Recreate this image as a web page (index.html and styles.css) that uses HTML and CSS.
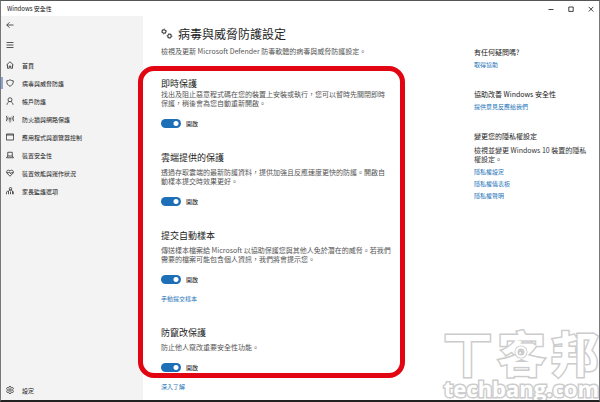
FILE: index.html
```html
<!DOCTYPE html>
<html lang="zh-Hant">
<head>
<meta charset="utf-8">
<meta name="viewport" content="width=device-width, initial-scale=1">
<title>Windows 安全性</title>
<link rel="stylesheet" href="styles.css">
</head>
<body>
<div class="window">
  <header class="titlebar">
    <span class="titlebar-name">Windows 安全性</span>
    <div class="titlebar-buttons">
      <button type="button" aria-label="最小化"><svg viewBox="0 0 6 6"><path d="M.5 3.5h5"/></svg></button>
      <button type="button" aria-label="最大化"><svg viewBox="0 0 6 6"><path d="M.8 1h4.4v4.4H.8z"/></svg></button>
      <button type="button" aria-label="關閉"><svg viewBox="0 0 6 6"><path d="M.7.9l4.6 4.6M5.3.9L.7 5.5"/></svg></button>
    </div>
  </header>
  <div class="body">
    <nav class="sidebar">
      <button type="button" class="nav-button" aria-label="返回"><svg class="icon" viewBox="0 0 16 16"><path d="M15 8H1.5M7 2.500L1.500 8 7 13.500"/></svg></button>
      <button type="button" class="nav-button menu" aria-label="功能表"><svg class="icon" viewBox="0 0 16 16"><path d="M1 3h14M1 8h14M1 13h14"/></svg></button>
      <ul class="nav-list">
        <li><a href="#"><svg class="icon" viewBox="0 0 16 16"><path d="M1 8l7-6.500L15 8M3 7v7.500h3.500V10h3v4.500H13V7"/></svg>首頁</a></li>
        <li><a href="#" class="active"><svg class="icon" viewBox="0 0 16 16"><path d="M8 1.500C6 3 4 3.500 1.500 3.500 1 9 3.500 12.500 8 14.500c4.500-2 7-5.500 6.500-11C12 3.500 10 3 8 1.500z"/></svg>病毒與威脅防護</a></li>
        <li><a href="#"><svg class="icon" viewBox="0 0 16 16"><circle cx="8" cy="5.500" r="4"/><path d="M2 15.500c.3-3.500 2-5.500 4.500-6.200M14 15.500c-.3-3.500-2-5.500-4.500-6.200"/></svg>帳戶防護</a></li>
        <li><a href="#"><svg class="icon" viewBox="0 0 16 16"><circle cx="8" cy="7" r="1.500"/><path d="M8 8.500V15M4.500 3.500c-1.700 2-1.700 5 0 7M11.500 3.500c1.700 2 1.700 5 0 7M2 1.500c-2.500 3-2.500 8 0 11M14 1.500c2.500 3 2.500 8 0 11"/></svg>防火牆與網路保護</a></li>
        <li><a href="#"><svg class="icon" viewBox="0 0 16 16"><path d="M.8 2h14.400v12H.8zM.8 4h14.400"/></svg>應用程式與瀏覽器控制</a></li>
        <li><a href="#"><svg class="icon" viewBox="0 0 16 16"><path d="M3.500 2.500h9V10h-9zM3.500 10L1 13.500h14L12.500 10"/></svg>裝置安全性</a></li>
        <li><a href="#"><svg class="icon" viewBox="0 0 16 16"><path d="M8 14.500L1.800 8C-.5 4.500 4.500-.3 8 4c3.500-4.300 8.500.5 6.200 4zM1.500 7.500h4l1.500-2 2 4 1.500-2h4"/></svg>裝置效能與運作狀況</a></li>
        <li><a href="#"><svg class="icon" viewBox="0 0 16 16"><circle cx="9" cy="3.500" r="2.500"/><path d="M5 14.500V9c0-4 8-4 8 0v5.500M9 9v5.500M1 14.500V11c0-2.500 3-3 4-2M13 9c2 0 2.500 1 2.500 3v2.500"/></svg>家長監護選項</a></li>
      </ul>
      <a href="#" class="nav-settings"><svg class="icon" viewBox="0 0 16 16"><circle cx="8" cy="8" r="2.500"/><path d="M6.500 1h3l.5 2 1.500.8 2-.8 1.500 2.500-1.500 1.500v2l1.500 1.500-1.500 2.500-2-.8-1.500.8-.5 2h-3L6 13l-1.500-.8-2 .8L1 10.500 2.500 9V7L1 5.500 2.500 3l2 .8L6 3z"/></svg>設定</a>
    </nav>
    <main class="content">
      <div class="settings">
        <h1><svg class="gears" viewBox="0 0 24 24"><circle cx="6" cy="7" r="3.500"/><circle class="teeth" cx="6" cy="7" r="5"/><circle cx="17" cy="16" r="3.500"/><circle class="teeth" cx="17" cy="16" r="5"/></svg>病毒與威脅防護設定</h1>
        <p class="intro">檢視及更新 Microsoft Defender 防毒軟體的病毒與威脅防護設定。</p>
        <div class="sections">
          <section class="compact">
            <h2>即時保護</h2>
            <p>找出及阻止惡意程式碼在您的裝置上安裝或執行，您可以暫時先關閉即時<br>保護，稍後會為您自動重新開啟。</p>
            <label class="toggle"><input type="checkbox" role="switch" checked>開啟</label>
          </section>
          <section>
            <h2>雲端提供的保護</h2>
            <p>透過存取雲端的最新防護資料，提供加強且反應速度更快的防護。開啟自<br>動樣本提交時效果更好。</p>
            <label class="toggle"><input type="checkbox" role="switch" checked>開啟</label>
          </section>
          <section>
            <h2>提交自動樣本</h2>
            <p>傳送樣本檔案給 Microsoft 以協助保護您與其他人免於潛在的威脅。若我們<br>需要的檔案可能包含個人資訊，我們將會提示您。</p>
            <label class="toggle"><input type="checkbox" role="switch" checked>開啟</label>
            <a href="#" class="more">手動提交樣本</a>
          </section>
          <section>
            <h2>防竄改保護</h2>
            <p>防止他人竄改重要安全性功能。</p>
            <label class="toggle"><input type="checkbox" role="switch" checked>開啟</label>
            <a href="#" class="more">深入了解</a>
          </section>
        </div>
      </div>
      <aside class="help">
        <section>
          <h3>有任何疑問嗎?</h3>
          <a href="#">取得協助</a>
        </section>
        <section>
          <h3>協助改善 Windows 安全性</h3>
          <a href="#">提供意見反應給我們</a>
        </section>
        <section>
          <h3>變更您的隱私權設定</h3>
          <p>檢視並變更 Windows 10 裝置的隱私<br>權設定。</p>
          <a href="#">隱私權設定</a>
          <a href="#">隱私權儀表板</a>
          <a href="#">隱私權聲明</a>
        </section>
      </aside>
    </main>
  </div>
  <div class="watermark">
    <span class="mark-name"><span>丅</span><span>客</span><span>邦</span></span>
    <svg class="mark-eye" viewBox="0 0 16 16"><circle class="ring" cx="8" cy="8" r="6.500"/><circle class="pupil" cx="8" cy="8" r="4"/><circle class="glint" cx="7" cy="9" r="1"/></svg>
    <span class="mark-site">techbang.com</span>
  </div>
</div>
</body>
</html>
```
FILE: styles.css
```css
* {
  box-sizing: border-box;
}

body {
  margin: 0;
  font-family: "Noto Sans CJK TC", "Noto Sans", sans-serif;
  font-size: 7px;
  line-height: 9px;
  color: #333;
  background: #fff;
}

h1, h2, h3, p, ul {
  margin: 0;
  padding: 0;
  font-weight: 400;
}

a {
  color: #2473b8;
  text-decoration: none;
}

button {
  border: 0;
  padding: 0;
  background: none;
  color: inherit;
}

svg {
  display: block;
  fill: none;
  stroke: currentColor;
}

.window {
  position: relative;
  display: flex;
  flex-direction: column;
  min-height: 100vh;
  overflow: hidden;
  border: 1px solid #777;
  border-top-color: #555;
  border-bottom: 2px solid #222;
}

.titlebar {
  display: flex;
  align-items: center;
  justify-content: space-between;
  height: 15px;
  padding: 0 5px 0 6px;
  font-size: 6px;
  color: #111;
}

.titlebar-buttons {
  display: flex;
  gap: 14px;
}

.titlebar-buttons svg {
  width: 6px;
  height: 6px;
  stroke-width: 0.8;
}

.body {
  display: flex;
  flex: 1;
}

/* Navigation */
.sidebar {
  display: flex;
  flex-direction: column;
  width: 142px;
  padding-bottom: 1px;
  font-size: 6px;
  color: #222;
  background: #f3f3f3;
}

.icon {
  width: 8px;
  height: 8px;
  stroke-width: 1.5;
}

.nav-button {
  height: 17px;
  padding-left: 5px;
}

.nav-button.menu {
  height: 23px;
}

.nav-list {
  flex: 1;
  list-style: none;
}

.sidebar a {
  display: flex;
  align-items: center;
  gap: 8px;
  height: 18px;
  padding-left: 5px;
  color: inherit;
}

.sidebar .active {
  padding-left: 3px;
  border-left: 2px solid #8ea5d3;
  border-image: linear-gradient(transparent 20%, #8ea5d3 20% 80%, transparent 80%) 1;
}

/* Settings page */
.content {
  display: flex;
  flex: 1;
  justify-content: space-between;
  padding: 10px 0 7px 18px;
}

.settings {
  width: 236px;
  white-space: nowrap;
}

h1 {
  display: flex;
  align-items: center;
  gap: 5px;
  font-size: 12px;
  line-height: 16px;
  color: #222;
}

.gears {
  width: 12px;
  height: 12px;
  stroke-width: 2;
}

.gears .teeth {
  stroke-width: 1.4;
  stroke-dasharray: 1.8 2.1;
}

.intro {
  margin-top: 5px;
}

.sections {
  position: relative;
  display: flex;
  flex-direction: column;
  gap: 24px;
  margin-top: 22px;
}

.sections::after {
  content: "";
  position: absolute;
  inset: -12px -8px 13px -23px;
  border: 5px solid #e20613;
  border-radius: 16px;
  pointer-events: none;
}

h2 {
  margin-bottom: 4px;
  font-size: 9px;
  line-height: 12px;
  color: #222;
}

.compact h2 {
  margin-bottom: 0;
}

.settings p {
  color: #555;
}

.toggle {
  display: flex;
  align-items: center;
  gap: 5px;
  height: 10px;
  margin-top: 10px;
  font-size: 6px;
  color: #111;
}

.toggle input {
  appearance: none;
  width: 20px;
  height: 9px;
  margin: 0;
  border-radius: 5px;
  background: radial-gradient(circle at 15px 50%, #fff 2px, #1d6fb8 3px);
}

.more {
  display: block;
  margin-top: 11px;
  font-size: 6px;
  line-height: 8px;
}

/* Help column */
.help {
  display: flex;
  flex-direction: column;
  gap: 21px;
  width: 125px;
  padding-top: 22px;
  color: #333;
}

.help h3 {
  font-size: 7px;
  color: #222;
}

.help p {
  margin-top: 5px;
}

.help a {
  display: block;
  margin-top: 3px;
  font-size: 6px;
}

/* Watermark */
.watermark {
  position: absolute;
  right: 0;
  bottom: 1px;
  display: flex;
  flex-direction: column;
  font-weight: 700;
  white-space: nowrap;
  color: #fff;
  -webkit-text-stroke: 3px #ccc;
  paint-order: stroke fill;
  pointer-events: none;
}

.mark-name {
  display: flex;
  justify-content: space-between;
  margin-bottom: 4px;
  font-size: 48px;
  line-height: 44px;
}

.mark-eye {
  position: absolute;
  top: 16px;
  left: calc(50% - 7px);
  width: 14px;
  height: 14px;
}

.mark-eye .ring {
  fill: #fff;
  stroke: #ccc;
  stroke-width: 2;
}

.mark-eye .pupil {
  fill: #ccc;
  stroke: none;
}

.mark-eye .glint {
  fill: #fff;
  stroke: none;
}

.mark-site {
  font-family: "Open Sans", sans-serif;
  font-size: 22px;
  line-height: 22px;
}
```
